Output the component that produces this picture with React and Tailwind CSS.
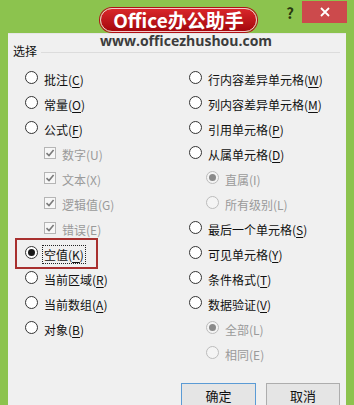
import React from "react";

const font = { fontFamily: '"Noto Sans CJK SC", "Noto Sans", sans-serif' };

function Radio({ checked, disabled }) {
  const border = disabled ? "border-[#bcbcbc]" : "border-[#333333]";
  const bg = disabled ? "bg-[#f4f4f4]" : "bg-white";
  return (
    <span className={`inline-flex items-center justify-center w-[13px] h-[13px] rounded-full border ${border} ${bg} shrink-0`}>
      {checked && (
        <span className={`w-[7px] h-[7px] rounded-full ${disabled ? "bg-[#8a8a8a]" : "bg-[#1a1a1a]"}`} />
      )}
    </span>
  );
}

function Check() {
  return (
    <span className="inline-flex items-center justify-center w-[12px] h-[12px] border border-[#b5b5b5] bg-[#f7f7f7] shrink-0">
      <svg width="10" height="10" viewBox="0 0 10 10">
        <path d="M1.5 5.2 L4 7.6 L8.6 2" fill="none" stroke="#7a7a7a" strokeWidth="1.6" />
      </svg>
    </span>
  );
}

function Label({ text, k, disabled, focus }) {
  const color = disabled ? "text-[#9a9a9a]" : "text-[#111111]";
  return (
    <span className={`text-[12px] leading-[16px] whitespace-nowrap ${color} ${focus ? "border border-dotted border-[#222] px-[1px]" : ""}`}>
      {text}(
      {disabled ? k : <span className="underline underline-offset-2">{k}</span>})
    </span>
  );
}

function Row({ type, checked, disabled, text, k, indent = 0, focus }) {
  return (
    <div className="h-[25px] flex items-center" style={{ paddingLeft: indent }}>
      {type === "check" ? <Check /> : <Radio checked={checked} disabled={disabled} />}
      <span className={focus ? "ml-[4px]" : "ml-[6px]"}>
        <Label text={text} k={k} disabled={disabled} focus={focus} />
      </span>
    </div>
  );
}

export default function App() {
  return (
    <div className="w-[354px] h-[405px] bg-[#8cc34e] overflow-hidden relative" style={font}>
      {/* title bar */}
      <div className="h-[33px] flex items-start justify-end pr-[7px] pt-[1px]">
        <span className="text-[15px] font-bold text-[#2a3a10] mr-[8px] mt-[2px] leading-[20px]">?</span>
        <div className="w-[45px] h-[22px] bg-[#cc4a4c] flex items-center justify-center">
          <svg width="10" height="10" viewBox="0 0 10 10">
            <path d="M1 1 L9 9 M9 1 L1 9" stroke="#fff" strokeWidth="1.8" />
          </svg>
        </div>
      </div>

      {/* content */}
      <div className="mx-[8px] h-[372px] bg-[#f0f0f0] border-t border-[#e6e6e6] pl-[5px] pr-[6px]">
        <div className="flex items-center pt-[8px] h-[26px]">
          <span className="text-[12px] text-[#111] leading-[16px]">选择</span>
          <div className="flex-1 ml-[4px] mt-[2px] h-px bg-[#dcdcdc]" />
        </div>
        <div className="flex mt-[5px]">
          <div className="w-[166px] pl-[12px]">
            <Row text="批注" k="C" />
            <Row text="常量" k="O" />
            <Row text="公式" k="F" />
            <Row type="check" text="数字" k="U" disabled indent={19} />
            <Row type="check" text="文本" k="X" disabled indent={19} />
            <Row type="check" text="逻辑值" k="G" disabled indent={19} />
            <Row type="check" text="错误" k="E" disabled indent={19} />
            <Row text="空值" k="K" checked focus />
            <Row text="当前区域" k="R" />
            <Row text="当前数组" k="A" />
            <Row text="对象" k="B" />
          </div>
          <div className="flex-1 pl-[10px]">
            <Row text="行内容差异单元格" k="W" />
            <Row text="列内容差异单元格" k="M" />
            <Row text="引用单元格" k="P" />
            <Row text="从属单元格" k="D" />
            <Row text="直属" k="I" checked disabled indent={17} />
            <Row text="所有级别" k="L" disabled indent={17} />
            <Row text="最后一个单元格" k="S" />
            <Row text="可见单元格" k="Y" />
            <Row text="条件格式" k="T" />
            <Row text="数据验证" k="V" />
            <Row text="全部" k="L" checked disabled indent={17} />
            <Row text="相同" k="E" disabled indent={17} />
          </div>
        </div>
        <div className="flex justify-end gap-[10px] mt-[18px]">
          <button className="w-[75px] h-[26px] border border-[#5b9bd5] bg-[#e5e5e5] text-[13px] text-[#111]">确定</button>
          <button className="w-[74px] h-[26px] border border-[#adadad] bg-[#e5e5e5] text-[13px] text-[#111]">取消</button>
        </div>
      </div>

      {/* highlight box */}
      <div className="absolute left-[15px] top-[238px] w-[83px] h-[31px] border-2 border-[#a8302f]" />

      {/* watermark logo */}
      <div className="absolute left-[100px] top-[8px] w-[157px] h-[24px] rounded-full bg-gradient-to-b from-[#d9262a] to-[#a5060c] border border-[#f3c9c9] flex items-center justify-center shadow-[0_0_0_1px_#b01015]">
        <span className="text-white font-bold text-[19px] leading-[22px]" style={{ fontFamily: '"Noto Sans CJK SC", "Open Sans", sans-serif' }}>Office办公助手</span>
      </div>
      <div className="absolute left-[100px] top-[32px] w-[158px] text-center text-[14px] font-bold text-[#3c3c3c] leading-[18px]" style={{ fontFamily: '"Open Sans", "Liberation Sans", sans-serif' }}>
        www.officezhushou.com
      </div>
    </div>
  );
}
